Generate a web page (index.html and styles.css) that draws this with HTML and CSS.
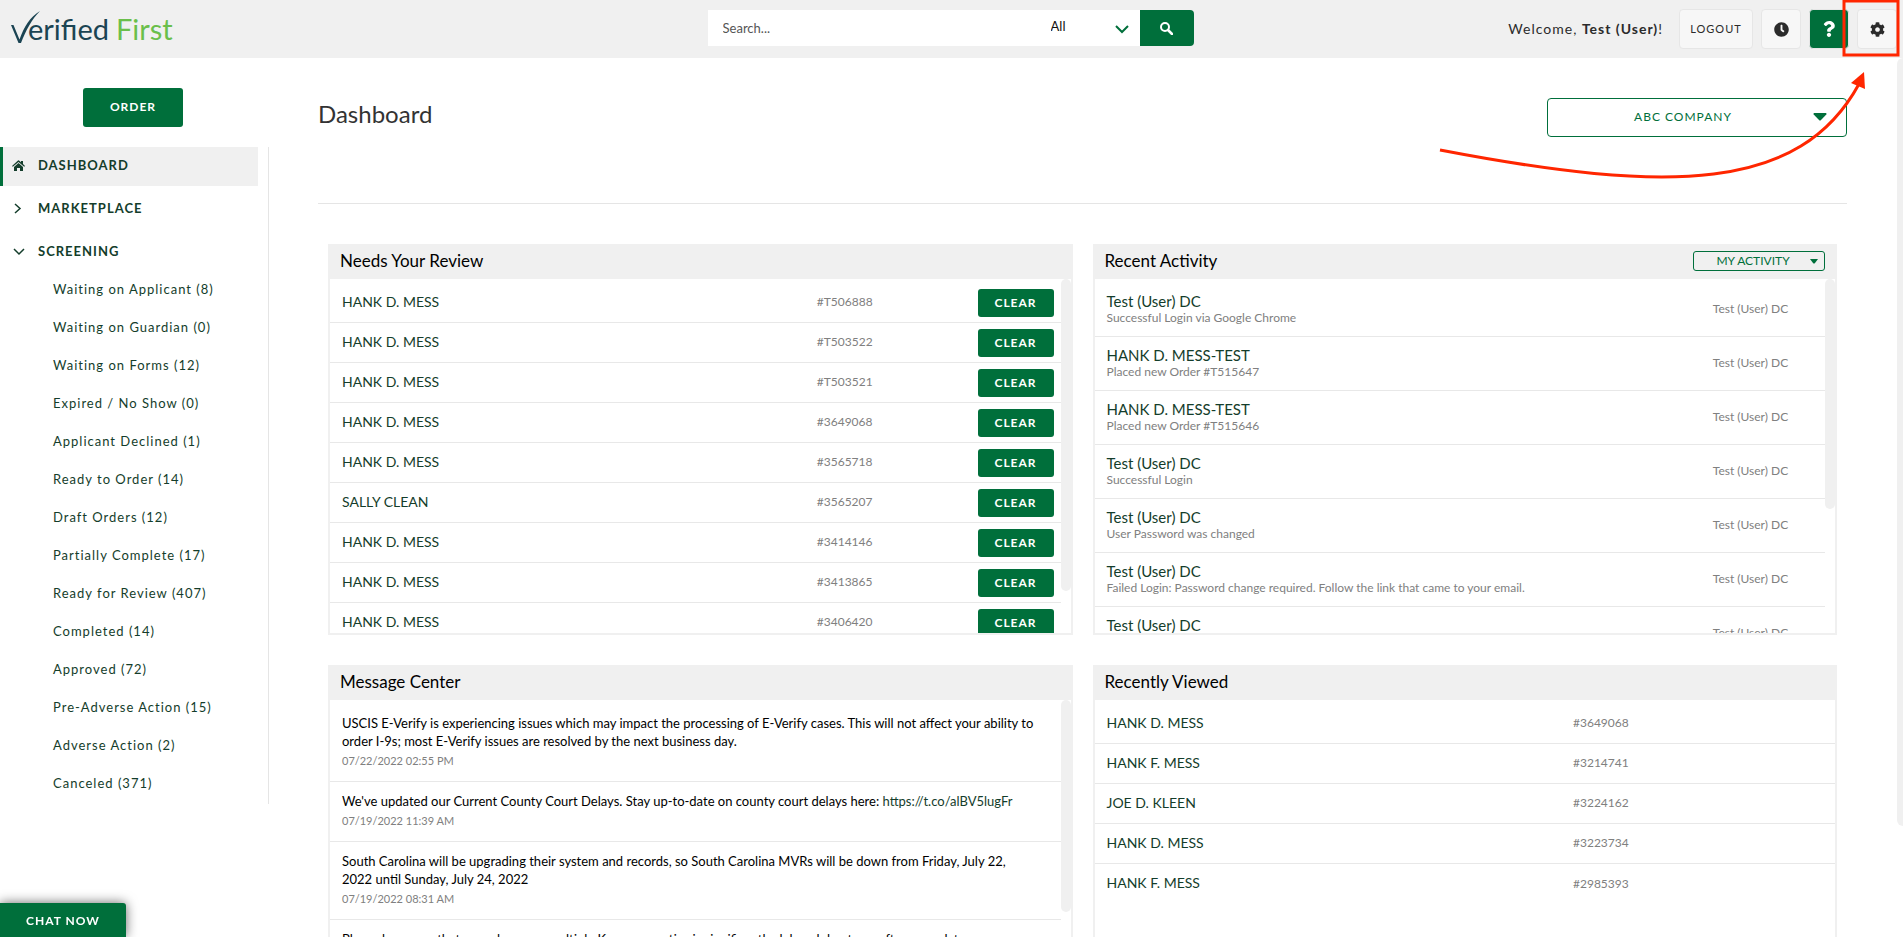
FILE: index.html
```html
<!DOCTYPE html>
<html lang="en">
<head>
  <meta charset="UTF-8">
  <meta name="viewport" content="width=device-width, initial-scale=1.0">
  <title>Verified First - Dashboard</title>
  <link rel="stylesheet" href="styles.css">
</head>
<body>
  <header class="topbar">
    <a class="logo" href="#" aria-label="Verified First">
      <svg class="logo-mark" width="30" height="34" viewBox="0 0 30 34" aria-hidden="true">
        <path d="M0 15h2.500l6 14.500C13 17 19 7 29 1 21 9 15 20 10 33H7.500z" fill="#1b4453"/>
      </svg>
      <span class="logo-dark">erified</span>
      <span class="logo-green">First</span>
    </a>

    <form class="search">
      <input type="text" class="search-text" placeholder="Search..." aria-label="Search">
      <div class="search-type">
        <select aria-label="Search type">
          <option>All</option>
          <option>Applicants</option>
          <option>Orders</option>
        </select>
        <svg class="arrow" width="14" height="9" viewBox="0 0 14 9"><path d="M1 1l6 6 6-6" fill="none" stroke="#006f3b" stroke-width="2"/></svg>
      </div>
      <button type="button" class="search-btn" aria-label="Search">
        <svg width="13" height="13" viewBox="0 0 13 13"><circle cx="5" cy="5" r="4" fill="none" stroke="#fff" stroke-width="2"/><path d="M8 8l4 4" stroke="#fff" stroke-width="2.500" stroke-linecap="round"/></svg>
      </button>
    </form>

    <div class="user-tools">
      <span class="welcome">Welcome, <b>Test (User)</b>!</span>
      <button class="tool logout">LOGOUT</button>
      <button class="tool" aria-label="History">
        <svg width="15" height="15" viewBox="0 0 512 512"><path fill="#2b2b2b" d="M256,8C119,8,8,119,8,256S119,504,256,504,504,393,504,256,393,8,256,8Zm92.49,313h0l-20,25a16,16,0,0,1-22.49,2.5h0l-67-49.72a40,40,0,0,1-15-31.23V112a16,16,0,0,1,16-16h32a16,16,0,0,1,16,16V256l58,42.5A16,16,0,0,1,348.49,321Z"/></svg>
      </button>
      <button class="tool help" aria-label="Help">
        <svg width="12" height="16" viewBox="0 0 384 512"><path fill="#fff" d="M202.021 0C122.202 0 70.503 32.703 29.914 91.026c-7.363 10.58-5.093 25.086 5.178 32.874l43.138 32.709c10.373 7.865 25.132 6.026 33.253-4.148 25.049-31.381 43.63-49.449 82.757-49.449 30.764 0 68.816 19.799 68.816 49.631 0 22.552-18.617 34.134-48.993 51.164-35.423 19.86-82.299 44.576-82.299 106.405V320c0 13.255 10.745 24 24 24h72.471c13.255 0 24-10.745 24-24v-5.773c0-42.86 125.268-44.645 125.268-160.627C377.504 66.256 286.902 0 202.021 0zM192 373.459c-38.196 0-69.271 31.075-69.271 69.271 0 38.195 31.075 69.27 69.271 69.27s69.271-31.075 69.271-69.271-31.075-69.27-69.271-69.27z"/></svg>
      </button>
      <button class="tool" aria-label="Settings">
        <svg width="15" height="15" viewBox="0 0 512 512"><path fill="#2b2b2b" d="M487.4 315.7l-42.6-24.6c4.3-23.2 4.3-47 0-70.2l42.6-24.6c4.9-2.8 7.1-8.6 5.5-14-11.1-35.6-30-67.8-54.7-94.6-3.8-4.1-10-5.1-14.8-2.3L380.8 110c-17.9-15.4-38.5-27.3-60.8-35.1V25.8c0-5.6-3.9-10.5-9.4-11.7-36.7-8.2-74.3-7.8-109.2 0-5.5 1.2-9.4 6.1-9.4 11.7V75c-22.2 7.9-42.8 19.8-60.8 35.1L88.7 85.5c-4.9-2.8-11-1.9-14.8 2.3-24.7 26.7-43.6 58.9-54.7 94.6-1.7 5.4.6 11.2 5.5 14L67.3 221c-4.3 23.2-4.3 47 0 70.2l-42.6 24.6c-4.9 2.8-7.1 8.6-5.5 14 11.1 35.6 30 67.8 54.7 94.6 3.8 4.1 10 5.1 14.8 2.3l42.6-24.6c17.9 15.4 38.5 27.3 60.8 35.1v49.2c0 5.6 3.9 10.5 9.4 11.7 36.7 8.2 74.3 7.8 109.2 0 5.5-1.2 9.4-6.1 9.4-11.7v-49.2c22.2-7.9 42.8-19.8 60.8-35.1l42.6 24.6c4.9 2.8 11 1.9 14.8-2.3 24.7-26.7 43.6-58.9 54.7-94.6 1.5-5.5-.7-11.3-5.6-14.1zM256 336c-44.1 0-80-35.9-80-80s35.9-80 80-80 80 35.9 80 80-35.9 80-80 80z"/></svg>
      </button>
    </div>
  </header>

  <div class="page">
    <aside class="sidebar">
      <button class="order-btn">ORDER</button>
      <nav class="menu">
        <a class="menu-item active" href="#">
          <svg width="13" height="11" viewBox="0 0 13 11"><path d="M0 6l6-5.500q.5-.4 1 0l2 1.800V1h2v3l2 2-.8.800L6.500 1.900.8 6.800z" fill="#143d2b"/><path d="M2 7l4.500-4L11 7v4H8V8H5v3H2z" fill="#143d2b"/></svg>
          DASHBOARD
        </a>
        <a class="menu-item" href="#">
          <svg width="13" height="11" viewBox="0 0 13 11"><path d="M3 1l5 4.500L3 10" fill="none" stroke="#143d2b" stroke-width="1.500"/></svg>
          MARKETPLACE
        </a>
        <a class="menu-item" href="#">
          <svg width="13" height="11" viewBox="0 0 13 11"><path d="M2 3l5 5 5-5" fill="none" stroke="#143d2b" stroke-width="1.500"/></svg>
          SCREENING
        </a>
        <ul class="submenu">
          <li><a href="#">Waiting on Applicant (8)</a></li>
          <li><a href="#">Waiting on Guardian (0)</a></li>
          <li><a href="#">Waiting on Forms (12)</a></li>
          <li><a href="#">Expired / No Show (0)</a></li>
          <li><a href="#">Applicant Declined (1)</a></li>
          <li><a href="#">Ready to Order (14)</a></li>
          <li><a href="#">Draft Orders (12)</a></li>
          <li><a href="#">Partially Complete (17)</a></li>
          <li><a href="#">Ready for Review (407)</a></li>
          <li><a href="#">Completed (14)</a></li>
          <li><a href="#">Approved (72)</a></li>
          <li><a href="#">Pre-Adverse Action (15)</a></li>
          <li><a href="#">Adverse Action (2)</a></li>
          <li><a href="#">Canceled (371)</a></li>
        </ul>
      </nav>
    </aside>

    <main class="content">
      <div class="title-row">
        <h1>Dashboard</h1>
        <div class="company">
          <select aria-label="Company"><option>ABC COMPANY</option></select>
          <svg class="arrow" width="14" height="8" viewBox="0 0 14 8"><path d="M1 0h12q1 .5.300 1.500L8 7q-1 1-2 0L.7 1.500Q0 .5 1 0z" fill="#006f3b"/></svg>
        </div>
      </div>

      <div class="panels">
        <section class="panel">
          <div class="panel-head"><h2>Needs Your Review</h2></div>
          <div class="panel-body">
            <div class="list">
              <table class="orders review">
                <tr><td class="name"><a href="#">HANK D. MESS</a></td><td class="num">#T506888</td><td class="act"><button class="clear">CLEAR</button></td></tr>
                <tr><td class="name"><a href="#">HANK D. MESS</a></td><td class="num">#T503522</td><td class="act"><button class="clear">CLEAR</button></td></tr>
                <tr><td class="name"><a href="#">HANK D. MESS</a></td><td class="num">#T503521</td><td class="act"><button class="clear">CLEAR</button></td></tr>
                <tr><td class="name"><a href="#">HANK D. MESS</a></td><td class="num">#3649068</td><td class="act"><button class="clear">CLEAR</button></td></tr>
                <tr><td class="name"><a href="#">HANK D. MESS</a></td><td class="num">#3565718</td><td class="act"><button class="clear">CLEAR</button></td></tr>
                <tr><td class="name"><a href="#">SALLY CLEAN</a></td><td class="num">#3565207</td><td class="act"><button class="clear">CLEAR</button></td></tr>
                <tr><td class="name"><a href="#">HANK D. MESS</a></td><td class="num">#3414146</td><td class="act"><button class="clear">CLEAR</button></td></tr>
                <tr><td class="name"><a href="#">HANK D. MESS</a></td><td class="num">#3413865</td><td class="act"><button class="clear">CLEAR</button></td></tr>
                <tr><td class="name"><a href="#">HANK D. MESS</a></td><td class="num">#3406420</td><td class="act"><button class="clear">CLEAR</button></td></tr>
              </table>
            </div>
            <div class="thumb thumb-review"></div>
          </div>
        </section>

        <section class="panel">
          <div class="panel-head">
            <h2>Recent Activity</h2>
            <div class="activity-filter">
              <select aria-label="Activity"><option>MY ACTIVITY</option></select>
              <svg class="arrow" width="8" height="5" viewBox="0 0 8 5"><path d="M0 0h8L5 4Q4 5 3 4z" fill="#006f3b"/></svg>
            </div>
          </div>
          <div class="panel-body">
            <div class="list">
              <table class="orders activity">
                <tr><td class="name"><a href="#">Test (User) DC</a><p>Successful Login via Google Chrome</p></td><td class="num">Test (User) DC</td></tr>
                <tr><td class="name"><a href="#">HANK D. MESS-TEST</a><p>Placed new Order #T515647</p></td><td class="num">Test (User) DC</td></tr>
                <tr><td class="name"><a href="#">HANK D. MESS-TEST</a><p>Placed new Order #T515646</p></td><td class="num">Test (User) DC</td></tr>
                <tr><td class="name"><a href="#">Test (User) DC</a><p>Successful Login</p></td><td class="num">Test (User) DC</td></tr>
                <tr><td class="name"><a href="#">Test (User) DC</a><p>User Password was changed</p></td><td class="num">Test (User) DC</td></tr>
                <tr><td class="name"><a href="#">Test (User) DC</a><p>Failed Login: Password change required. Follow the link that came to your email.</p></td><td class="num">Test (User) DC</td></tr>
                <tr><td class="name"><a href="#">Test (User) DC</a><p>Successful Login</p></td><td class="num">Test (User) DC</td></tr>
              </table>
            </div>
            <div class="thumb thumb-activity"></div>
          </div>
        </section>

        <section class="panel">
          <div class="panel-head"><h2>Message Center</h2></div>
          <div class="panel-body">
            <ul class="list messages">
              <li>
                <p>USCIS E-Verify is experiencing issues which may impact the processing of E-Verify cases. This will not affect your ability to order I-9s; most E-Verify issues are resolved by the next business day.</p>
                <time>07/22/2022 02:55 PM</time>
              </li>
              <li>
                <p>We've updated our Current County Court Delays. Stay up-to-date on county court delays here: <a href="#">https://t.co/alBV5lugFr</a></p>
                <time>07/19/2022 11:39 AM</time>
              </li>
              <li>
                <p>South Carolina will be upgrading their system and records, so South Carolina MVRs will be down from Friday, July 22, 2022 until Sunday, July 24, 2022</p>
                <time>07/19/2022 08:31 AM</time>
              </li>
              <li>
                <p>Please be aware that records across multiple Kansas counties is significantly delayed due to a software update.</p>
                <time>07/18/2022 09:12 AM</time>
              </li>
            </ul>
            <div class="thumb thumb-messages"></div>
          </div>
        </section>

        <section class="panel">
          <div class="panel-head"><h2>Recently Viewed</h2></div>
          <div class="panel-body">
            <div class="list">
              <table class="orders viewed">
                <tr><td class="name"><a href="#">HANK D. MESS</a></td><td class="num">#3649068</td></tr>
                <tr><td class="name"><a href="#">HANK F. MESS</a></td><td class="num">#3214741</td></tr>
                <tr><td class="name"><a href="#">JOE D. KLEEN</a></td><td class="num">#3224162</td></tr>
                <tr><td class="name"><a href="#">HANK D. MESS</a></td><td class="num">#3223734</td></tr>
                <tr><td class="name"><a href="#">HANK F. MESS</a></td><td class="num">#2985393</td></tr>
              </table>
            </div>
          </div>
        </section>
      </div>
    </main>
    <div class="page-thumb"></div>
  </div>

  <button class="chat">CHAT NOW</button>

  <!-- red callout pointing at the settings button -->
  <svg class="callout" width="480" height="190" viewBox="0 0 480 190" aria-hidden="true">
    <rect x="421" y="1" width="54" height="54" fill="none" stroke="#ff2600" stroke-width="3"/>
    <path d="M17 150C247 194 377 192 436 84" fill="none" stroke="#ff2600" stroke-width="3"/>
    <path d="M441 72l1 17-14-6z" fill="#ff2600"/>
  </svg>
</body>
</html>
```

FILE: styles.css
```css
* { box-sizing: border-box; }
body { margin: 0; height: 100vh; overflow: hidden; display: flex; flex-direction: column; font-family: Lato, "Liberation Sans", sans-serif; font-size: 14px; color: #000; background: #fff; }
h1, h2, p, ul { margin: 0; padding: 0; font-weight: normal; }
ul { list-style: none; }
a { color: #143d2b; text-decoration: none; }
button, input, select { font-family: inherit; margin: 0; border: 0; border-radius: 0; }
button { cursor: pointer; padding: 0 0 2px; }
select { appearance: none; background: #fff; }
svg { display: block; }

/* top bar */
.topbar { flex: none; height: 58px; background: #f0f0f0; display: grid; grid-template-columns: 37% 486px 1fr; align-items: center; padding: 0 6px 0 9px; }
.logo { display: flex; align-items: center; padding-left: 2px; font-size: 29px; line-height: 34px; }
.logo-mark { margin-right: -13px; margin-bottom: 4px; }
.logo-dark { color: #1b4453; }
.logo-green { color: #6abf4b; margin-left: 7px; }
.search { display: flex; height: 36px; margin-bottom: 2px; }
.search-text { flex: 1; width: 0; padding: 0 15px; font-size: 13px; background: #fff; color: #333; }
.search-text::placeholder { color: #555; }
.search-type { position: relative; width: 104px; }
.search-type select { width: 100%; height: 100%; padding: 0 15px 4px; font-size: 13px; color: #111; }
.search-type .arrow { position: absolute; right: 11px; top: 15px; pointer-events: none; }
.search-btn { width: 54px; padding: 0; background: #006f3b; border-radius: 0 4px 4px 0; display: flex; align-items: center; justify-content: center; }
.user-tools { display: flex; align-items: center; justify-content: flex-end; gap: 8px; }
.welcome { font-size: 14px; letter-spacing: 1px; color: #2b2b2b; margin-right: 8px; padding-bottom: 2px; }
.tool { width: 40px; height: 40px; padding: 0; background: #f7f7f7; border: 1px solid #e6e6e6; border-radius: 4px; display: flex; align-items: center; justify-content: center; color: #2b2b2b; }
.logout { width: 74px; padding-bottom: 2px; font-size: 11px; letter-spacing: 1px; }
.help { background: #006f3b; }

.page { flex: 1; min-height: 0; display: flex; }

/* sidebar */
.sidebar { flex: none; width: 269px; padding-top: 30px; }
.order-btn { display: block; width: 100px; height: 39px; margin: 0 0 20px 83px; background: #006f3b; color: #fff; border-radius: 3px; font-size: 12px; font-weight: bold; letter-spacing: 1px; }
.menu { border-right: 1px solid #e5e5e5; }
.menu-item { display: flex; align-items: center; gap: 13px; height: 39px; margin: 0 10px 4px 0; padding: 0 0 3px 9px; border-left: 3px solid transparent; font-size: 13px; font-weight: bold; letter-spacing: 1px; }
.menu-item.active { background: #f0f0f0; border-left-color: #006f3b; }
.submenu { padding-bottom: 2px; margin-top: -6px; }
.submenu a { display: block; padding-left: 53px; font-size: 13px; line-height: 38px; letter-spacing: 1px; }

/* main area */
.content { flex: 1; min-width: 0; padding: 40px 50px 20px 49px; overflow-y: auto; scrollbar-width: none; }
.title-row { display: flex; justify-content: space-between; align-items: flex-start; height: 106px; border-bottom: 1px solid #e5e5e5; }
h1 { font-size: 24px; line-height: 32px; color: #333; }
.company { position: relative; width: 300px; height: 39px; }
.company select { width: 100%; height: 100%; padding: 0 40px 2px 12px; border: 1px solid #006f3b; border-radius: 4px; color: #006f3b; font-size: 12px; letter-spacing: 1px; text-align: center; text-align-last: center; }
.company .arrow { position: absolute; right: 20px; top: 15px; pointer-events: none; }
.page-thumb { flex: none; width: 6px; height: 82vh; background: #f0f0f0; border-radius: 6px 0 0 6px; }

/* panels */
.panels { display: grid; grid-template-columns: 1fr 1fr; gap: 30px 20px; padding: 40px 10px 0; }
.panel { height: 391px; display: flex; flex-direction: column; border: 2px solid #f0f0f0; border-top: 0; min-width: 0; }
.panel-head { flex: none; height: 35px; padding: 0 10px 2px; background: #f0f0f0; display: flex; align-items: center; justify-content: space-between; }
h2 { font-size: 17px; line-height: 32px; }
.panel-body { flex: 1; min-height: 0; display: flex; align-items: flex-start; }
.list { flex: 1; min-width: 0; height: 100%; padding-top: 4px; overflow: hidden; }
.thumb { flex: none; width: 10px; background: #f0f0f0; border-radius: 5px; }
.thumb-review { height: 88%; }
.thumb-activity { height: 65%; }
.thumb-messages { height: 60%; }
.activity-filter { position: relative; width: 132px; height: 20px; }
.activity-filter select { width: 100%; height: 100%; padding: 0 16px 0 4px; border: 1px solid #006f3b; border-radius: 3px; background: transparent; color: #006f3b; font-size: 12px; text-align: center; text-align-last: center; }
.activity-filter .arrow { position: absolute; right: 7px; top: 8px; pointer-events: none; }

.orders { width: 100%; border-collapse: separate; border-spacing: 0; table-layout: fixed; }
.orders td { height: 40px; padding: 0 12px 2px; border-bottom: 1px solid #e8e8e8; vertical-align: middle; }
.orders .name { font-size: 14px; line-height: 18px; }
.orders .num { font-size: 12px; color: #808080; }
.orders .act { padding: 0 7px 0 0; }
.review .name { width: 65%; }
.viewed .name { width: 63%; }
.viewed tr:last-child td { border-bottom: 0; }
.orders.activity td { height: 54px; }
.orders.activity .name { width: 83%; font-size: 15px; }
.activity p { font-size: 12px; line-height: 16px; color: #808080; }
.clear { display: block; width: 76px; height: 28px; padding: 0; margin-left: auto; background: #006f3b; color: #fff; border-radius: 3px; font-size: 12px; font-weight: bold; letter-spacing: 1px; }

.messages li { padding: 10px 24px 11px 12px; border-bottom: 1px solid #e8e8e8; font-size: 13px; line-height: 18px; }
.messages time { display: block; padding-top: 2px; font-size: 11px; color: #808080; }

.chat { position: fixed; left: 0; bottom: 0; width: 126px; height: 34px; padding: 0; background: #006f3b; color: #fff; border-radius: 0 3px 0 0; box-shadow: 0 0 12px rgba(0,0,0,0.6); font-size: 12px; font-weight: bold; letter-spacing: 1px; }
.callout { position: absolute; top: 0; right: 0; pointer-events: none; }
```
